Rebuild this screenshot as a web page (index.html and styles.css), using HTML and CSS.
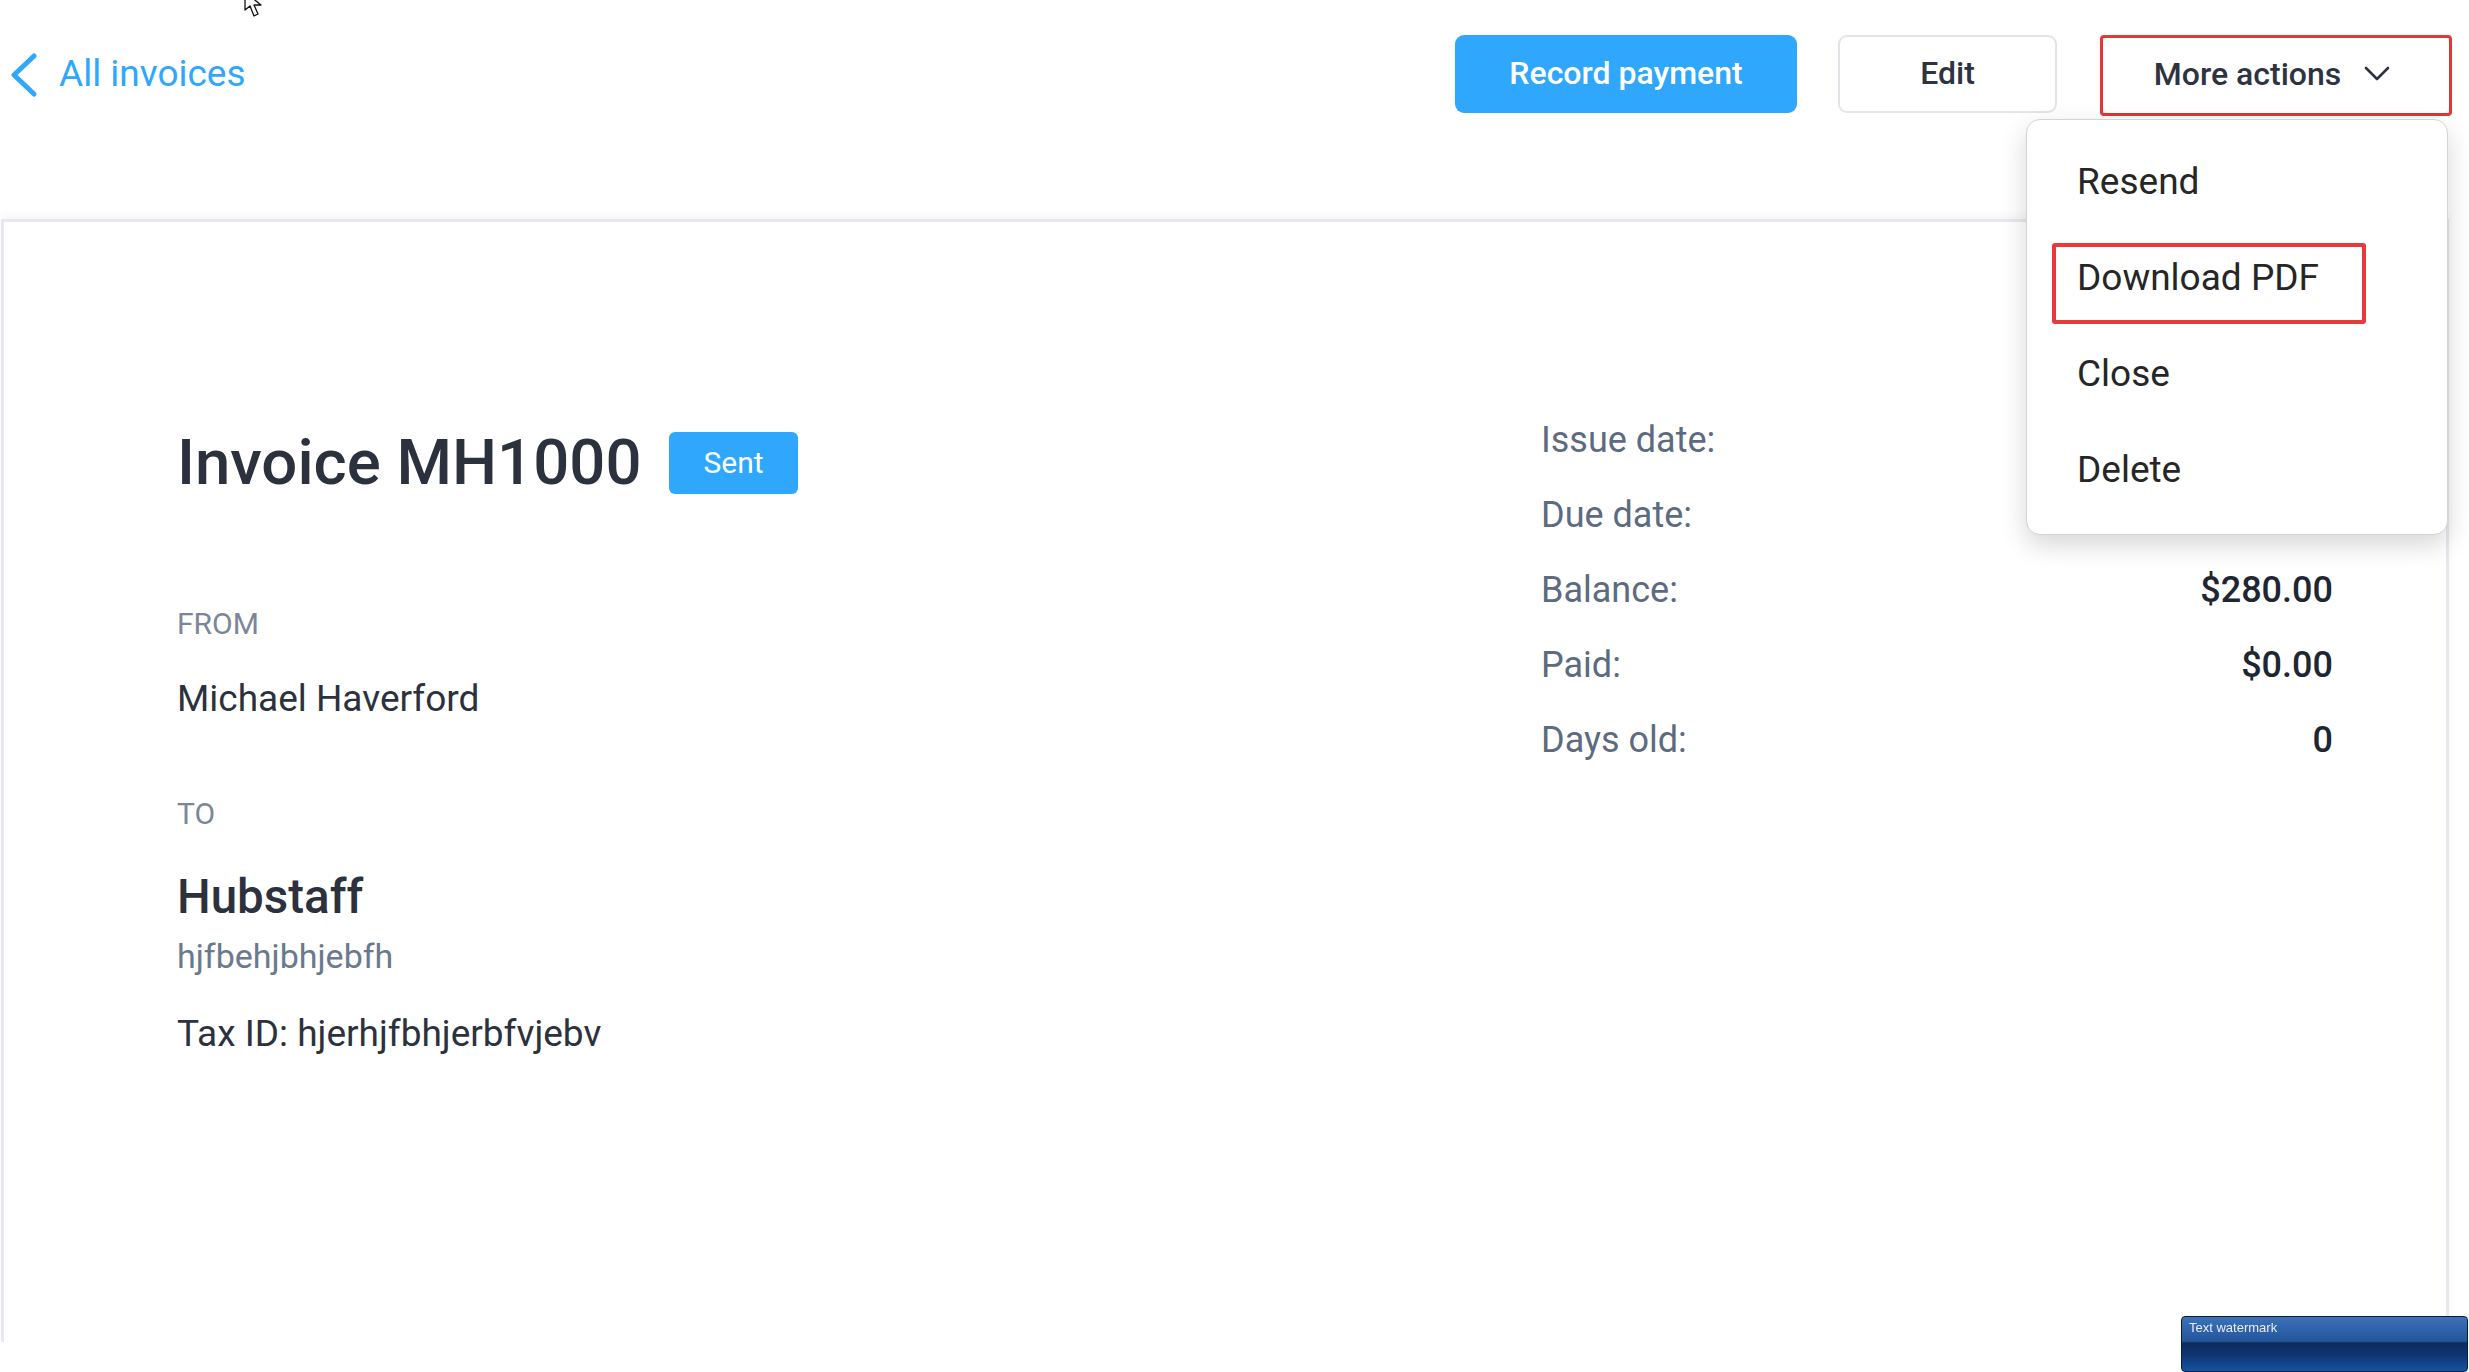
FILE: index.html
```html
<!DOCTYPE html>
<html lang="en">
<head>
  <meta charset="UTF-8" />
  <meta name="viewport" content="width=device-width, initial-scale=1.0" />
  <title>Invoice MH1000</title>
  <link rel="stylesheet" href="styles.css">
</head>
<body>
  <div class="topbar">
    <a class="back-link" href="#">
      <svg class="back-icon" width="30" height="44" viewBox="0 0 30 44">
        <path d="M25 3 L5 22 L25 41" fill="none" stroke="currentColor" stroke-width="5" stroke-linecap="round" stroke-linejoin="round"/>
      </svg>
      <span>All invoices</span>
    </a>
    <div class="actions">
      <button class="button-fill">Record payment</button>
      <button class="button-outline">Edit</button>
      <div class="marked-box">
        <button class="button-more">
          More actions
          <svg width="26" height="16" viewBox="0 0 26 16">
            <path d="M2 2 L13 13 L24 2" fill="none" stroke="currentColor" stroke-width="2.6" stroke-linecap="round" stroke-linejoin="round"/>
          </svg>
        </button>
        <div class="dropdown">
          <div class="menu-item">Resend</div>
          <div class="menu-item marked">Download PDF</div>
          <div class="menu-item">Close</div>
          <div class="menu-item">Delete</div>
        </div>
      </div>
    </div>
  </div>

  <div class="card">
    <div class="party-col">
      <div class="title-row">
        <h1 class="title">Invoice MH1000</h1>
        <span class="badge">Sent</span>
      </div>
      <div class="label label-from">FROM</div>
      <div class="sender">Michael Haverford</div>
      <div class="label label-to">TO</div>
      <div class="client">Hubstaff</div>
      <div class="client-address">hjfbehjbhjebfh</div>
      <div class="tax-id">Tax ID: hjerhjfbhjerbfvjebv</div>
    </div>
    <div class="summary-col">
      <div class="summary-row"><span class="summary-label">Issue date:</span><span class="summary-value">Mon, Jul 24, 2023</span></div>
      <div class="summary-row"><span class="summary-label">Due date:</span><span class="summary-value">Mon, Jul 24, 2023</span></div>
      <div class="summary-row"><span class="summary-label">Balance:</span><span class="summary-value">$280.00</span></div>
      <div class="summary-row"><span class="summary-label">Paid:</span><span class="summary-value">$0.00</span></div>
      <div class="summary-row"><span class="summary-label">Days old:</span><span class="summary-value">0</span></div>
    </div>
  </div>

  <svg class="cursor" width="28" height="22" viewBox="0 0 28 22">
    <path d="M2 -8 L2 10 L7 6 L11 16 L15 14 L11 5 L18 5 Z" fill="#fff" stroke="#111" stroke-width="1.3" stroke-linejoin="round"/>
  </svg>

  <div class="watermark">Text watermark</div>
</body>
</html>
```

FILE: styles.css
```css
    body {
      font-family: 'Roboto', sans-serif;
      margin: 0;
      background-color: #ffffff;
      color: #2d3440;
      overflow: hidden;
    }

    .topbar {
      display: flex;
      align-items: flex-start;
      justify-content: space-between;
      height: 219px;
      box-sizing: border-box;
      padding: 35px 17px 0 9px;
    }

    .back-link {
      display: flex;
      align-items: center;
      gap: 20px;
      height: 78px;
      color: #2ea7fd;
      text-decoration: none;
      font-size: 37px;
      line-height: 1.2;
    }

    .back-icon {
      margin-top: 2px;
    }

    .actions {
      display: flex;
      align-items: flex-start;
    }

    .button-fill, .button-outline, .button-more {
      font-family: 'Roboto', sans-serif;
      font-size: 32px;
      font-weight: 500;
      height: 78px;
      padding: 0 0 2px;
      border-radius: 9px;
      cursor: pointer;
    }

    .button-fill {
      width: 342px;
      background-color: #2ea7fd;
      color: #ffffff;
      border: none;
    }

    .button-outline {
      width: 219px;
      margin-left: 41px;
      background-color: #ffffff;
      color: #2d3440;
      border: 2px solid #e1e5ea;
    }

    /* red annotation boxes from the screenshot */
    .marked-box {
      position: relative;
      margin-left: 43px;
      border: 3px solid #e8393c;
      border-radius: 4px;
    }

    .button-more {
      display: flex;
      align-items: center;
      justify-content: center;
      gap: 23px;
      width: 346px;
      height: 75px;
      background-color: #ffffff;
      color: #2d3440;
      border: none;
      border-radius: 6px;
      box-shadow: 0 1px 6px rgba(0, 0, 0, 0.14);
      padding: 0 8px 4px 0;
    }

    .dropdown {
      position: absolute;
      top: 81px;
      right: 1px;
      width: 422px;
      box-sizing: border-box;
      padding: 14px 0 16px 50px;
      background-color: #ffffff;
      border: 1px solid #d4d4d4;
      border-radius: 14px;
      box-shadow: 0 10px 26px rgba(0, 0, 0, 0.16);
      z-index: 2;
    }

    .menu-item {
      font-size: 37px;
      line-height: 96px;
      color: #262626;
    }

    .menu-item.marked {
      width: 314px;
      box-sizing: border-box;
      margin: 13px 0 2px -25px;
      padding: 0 0 12px 21px;
      line-height: 61px;
      border: 4px solid #e8393c;
      border-radius: 3px;
    }

    .card {
      display: flex;
      justify-content: space-between;
      width: 2448px;
      height: 1123px;
      margin-left: 1px;
      box-sizing: border-box;
      padding: 181px 113px 0 173px;
      border: 3px solid #e5e8ed;
      border-bottom: none;
      box-shadow: 0 -4px 8px rgba(0, 0, 0, 0.04);
    }

    .party-col {
      padding-top: 20px;
    }

    .title-row {
      display: flex;
      align-items: center;
      gap: 28px;
    }

    .title {
      margin: 0;
      font-size: 63.5px;
      font-weight: 500;
      line-height: 79px;
      color: #2b323d;
    }

    .badge {
      background-color: #2ea7fd;
      color: #ffffff;
      font-size: 30px;
      line-height: 62px;
      padding: 0 34px;
      border-radius: 6px;
    }

    .label {
      font-size: 30px;
      line-height: 1.2;
      color: #7b8798;
    }

    .label-from {
      margin-top: 104px;
    }

    .label-to {
      margin-top: 75px;
    }

    .sender, .tax-id {
      font-size: 37px;
      line-height: 1.2;
      color: #2b323d;
      margin-top: 35px;
    }

    .client {
      font-size: 47.5px;
      font-weight: 500;
      line-height: 1.2;
      color: #2b323d;
      margin-top: 37px;
    }

    .client-address {
      font-size: 34px;
      line-height: 1.2;
      color: #6b798c;
      margin-top: 10px;
    }

    .summary-col {
      width: 792px;
    }

    .summary-row {
      display: flex;
      justify-content: space-between;
      font-size: 36px;
      line-height: 75px;
    }

    .summary-label {
      color: #5c6b7f;
    }

    .summary-value {
      color: #1e2631;
      font-weight: 500;
    }

    .cursor {
      position: absolute;
      top: 0;
      left: 243px;
    }

    .watermark {
      position: fixed;
      right: 1px;
      bottom: 0;
      width: 287px;
      height: 56px;
      box-sizing: border-box;
      padding: 3px 0 0 7px;
      font-family: 'Liberation Sans', Arial, sans-serif;
      font-size: 13px;
      color: #e6ecf5;
      border: 1px solid #0a1c3a;
      border-radius: 4px;
      background: linear-gradient(#3d72b8 0%, #23559b 45%, #0d2b5c 48%, #0f3570 70%, #1553a3 100%);
      z-index: 3;
    }
```
